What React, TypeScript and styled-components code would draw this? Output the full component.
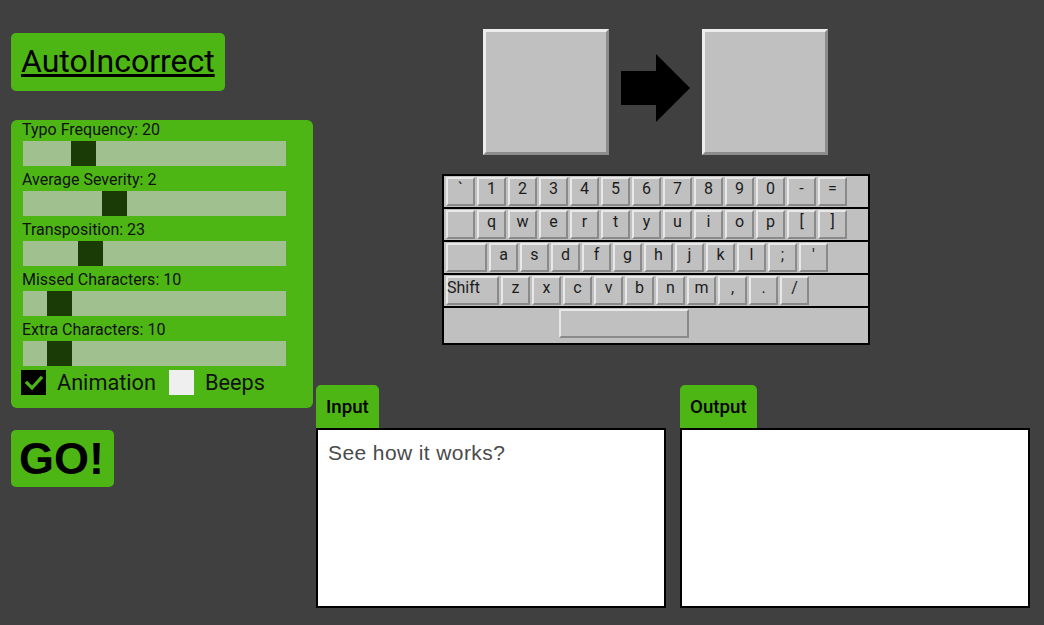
import React, { useState } from "react";
import styled, { createGlobalStyle } from "styled-components";

const GREEN = "#4eb614";

const Global = createGlobalStyle`
  html, body { margin: 0; padding: 0; background: #404040; }
  body { font-family: Roboto, "Noto Sans", sans-serif; color: #111; }
  * { box-sizing: border-box; }
`;

const Page = styled.div`
  display: flex;
  align-items: flex-start;
  width: 1044px;
  height: 625px;
  overflow: hidden;
`;

const LeftColumn = styled.div`
  display: flex;
  flex-direction: column;
  align-items: flex-start;
  width: 302px;
  margin-left: 11px;
  padding-top: 33px;
`;

const Title = styled.h1`
  margin: 0;
  padding: 10px 10px;
  background: ${GREEN};
  border-radius: 5px;
  font-family: Roboto, sans-serif;
  font-weight: 400;
  font-size: 32px;
  line-height: 37.5px;
  color: #000;
  text-decoration: underline;
  text-decoration-thickness: 3px;
  text-underline-offset: 2px;
`;

const Settings = styled.div`
  margin-top: 29px;
  width: 302px;
  background: ${GREEN};
  border-radius: 6px;
  padding: 0 10px 13px 10px;
`;

const SliderLabel = styled.label`
  display: block;
  font-size: 16px;
  line-height: 19px;
  color: #111;
  padding-left: 1px;
`;

const Range = styled.input`
  -webkit-appearance: none;
  appearance: none;
  display: block;
  width: 263px;
  height: 25px;
  margin: 2px 0 4px 2px;
  background: #a0c08f;
  outline: none;
  border: none;
  &::-webkit-slider-thumb {
    -webkit-appearance: none;
    appearance: none;
    width: 25px;
    height: 25px;
    background: #1b3b06;
    border: none;
    cursor: pointer;
  }
`;

const ToggleRow = styled.div`
  display: flex;
  align-items: center;
  height: 25px;
`;

const Toggle = styled.label`
  display: flex;
  align-items: center;
  margin-right: 13px;
  cursor: pointer;
  font-size: 21.7px;
  line-height: 25px;
  color: #111;
`;

const HiddenInput = styled.input`
  position: absolute;
  opacity: 0;
  width: 0;
  height: 0;
  margin: 0;
`;

const Box = styled.span<{ $on: boolean }>`
  display: flex;
  align-items: center;
  justify-content: center;
  width: 25px;
  height: 25px;
  margin-right: 11px;
  background: ${(p) => (p.$on ? "#000" : "#efefef")};
`;

const GoButton = styled.button`
  margin-top: 22px;
  padding: 3px 10px 2px 8px;
  border: none;
  border-radius: 5px;
  background: ${GREEN};
  font-family: "Liberation Sans", Arial, sans-serif;
  font-weight: 700;
  font-size: 45px;
  line-height: 52px;
  color: #000;
  cursor: pointer;
`;

const RightColumn = styled.div`
  display: flex;
  flex-direction: column;
  margin-left: 3px;
  width: 714px;
`;

const Stage = styled.div`
  display: flex;
  flex-direction: column;
  align-items: center;
  width: 428px;
  margin-left: 126px;
  padding-top: 29px;
`;

const Images = styled.div`
  display: flex;
  gap: 12px;
  align-items: flex-start;
  margin-left: -1px;
`;

const Frame = styled.div`
  width: 126px;
  height: 126px;
  background: #c0c0c0;
  border: 3px solid;
  border-color: #ededed #8c8c8c #8c8c8c #ededed;
`;

const Arrow = styled.svg`
  margin-top: 25px;
  display: block;
`;

const Keyboard = styled.div`
  margin-top: 19px;
  width: 428px;
  border: 2px solid #000;
  background: #c0c0c0;
`;

const KeyRow = styled.div<{ $tall?: boolean; $first?: boolean }>`
  box-sizing: content-box;
  display: flex;
  align-items: flex-start;
  height: ${(p) => (p.$tall ? 35 : 31)}px;
  padding: 0 1px;
  border-top: ${(p) => (p.$first ? "none" : "2px solid #000")};
`;

const Key = styled.div<{ $w?: number; $left?: boolean; $offset?: number }>`
  flex: none;
  width: ${(p) => p.$w ?? 29}px;
  height: 29px;
  margin: 1px;
  margin-left: ${(p) => p.$offset ?? 1}px;
  border: 2px solid;
  border-color: #e8e8e8 #8a8a8a #8a8a8a #e8e8e8;
  background: #c0c0c0;
  font-family: Roboto, sans-serif;
  font-size: 16px;
  line-height: 19px;
  color: #1c1c1c;
  text-align: ${(p) => (p.$left ? "left" : "center")};
  padding: 0;
  white-space: nowrap;
  ${(p) => (p.$left ? "text-indent: -1px;" : "")}
`;

const IORow = styled.div`
  display: flex;
  gap: 14px;
  margin-top: 40px;
`;

const IOCol = styled.div`
  display: flex;
  flex-direction: column;
  align-items: flex-start;
`;

const IOLabel = styled.div`
  padding: 11px 10px 10px 10px;
  background: ${GREEN};
  border-radius: 5px 5px 0 0;
  font-family: Roboto, sans-serif;
  font-weight: 500;
  font-size: 18.7px;
  line-height: 22px;
  color: #000;
`;

const TextBox = styled.textarea`
  display: block;
  width: 350px;
  height: 180px;
  border: 2px solid #000;
  border-radius: 0;
  background: #fff;
  padding: 11px 10px;
  margin: 0;
  resize: none;
  outline: none;
  font-family: "Liberation Sans", Arial, sans-serif;
  font-size: 21px;
  letter-spacing: 0.4px;
  color: #4a4a4a;
`;

const rows: { keys: { k: string; w?: number; left?: boolean; offset?: number }[]; tall?: boolean }[] = [
  { keys: "` 1 2 3 4 5 6 7 8 9 0 - =".split(" ").map((k) => ({ k })) },
  { keys: [{ k: "" }, ..."q w e r t y u i o p [ ]".split(" ").map((k) => ({ k }))] },
  { keys: [{ k: "", w: 41 }, ..."a s d f g h j k l ; '".split(" ").map((k) => ({ k }))] },
  { keys: [{ k: "Shift", w: 53, left: true }, ..."z x c v b n m , . /".split(" ").map((k) => ({ k }))] },
  { keys: [{ k: "", w: 130, offset: 114 }], tall: true },
];

const sliders = [
  { label: "Typo Frequency", min: 0, max: 100, value: 20 },
  { label: "Average Severity", min: 0, max: 6, value: 2 },
  { label: "Transposition", min: 0, max: 100, value: 23 },
  { label: "Missed Characters", min: 0, max: 100, value: 10 },
  { label: "Extra Characters", min: 0, max: 100, value: 10 },
];

function Check({ on }: { on: boolean }) {
  return on ? (
    <svg width="25" height="25" viewBox="0 0 25 25">
      <polyline points="6,13 11,18 20,8" fill="none" stroke={GREEN} strokeWidth="3.2" strokeLinecap="square" />
    </svg>
  ) : null;
}

export default function App() {
  const [vals, setVals] = useState(sliders.map((s) => s.value));
  const [anim, setAnim] = useState(true);
  const [beeps, setBeeps] = useState(false);

  return (
    <>
      <Global />
      <Page>
        <LeftColumn>
          <Title>AutoIncorrect</Title>
          <Settings>
            {sliders.map((s, i) => (
              <div key={s.label}>
                <SliderLabel>
                  {s.label}: {vals[i]}
                </SliderLabel>
                <Range
                  type="range"
                  min={s.min}
                  max={s.max}
                  value={vals[i]}
                  onChange={(e) => {
                    const n = [...vals];
                    n[i] = Number(e.target.value);
                    setVals(n);
                  }}
                />
              </div>
            ))}
            <ToggleRow>
              <Toggle>
                <HiddenInput type="checkbox" checked={anim} onChange={() => setAnim(!anim)} />
                <Box $on={anim}>
                  <Check on={anim} />
                </Box>
                Animation
              </Toggle>
              <Toggle>
                <HiddenInput type="checkbox" checked={beeps} onChange={() => setBeeps(!beeps)} />
                <Box $on={beeps}>
                  <Check on={beeps} />
                </Box>
                Beeps
              </Toggle>
            </ToggleRow>
          </Settings>
          <GoButton>GO!</GoButton>
        </LeftColumn>
        <RightColumn>
          <Stage>
            <Images>
              <Frame />
              <Arrow width="69" height="68" viewBox="0 0 69 68">
                <polygon points="0,17 35,17 35,0 69,34 35,68 35,51 0,51" fill="#000" />
              </Arrow>
              <Frame />
            </Images>
            <Keyboard>
              {rows.map((r, ri) => (
                <KeyRow key={ri} $tall={r.tall} $first={ri === 0}>
                  {r.keys.map((k, ki) => (
                    <Key key={ki} $w={k.w} $left={k.left} $offset={k.offset}>
                      {k.k}
                    </Key>
                  ))}
                </KeyRow>
              ))}
            </Keyboard>
          </Stage>
          <IORow>
            <IOCol>
              <IOLabel>Input</IOLabel>
              <TextBox defaultValue="See how it works?" spellCheck={false} />
            </IOCol>
            <IOCol>
              <IOLabel>Output</IOLabel>
              <TextBox spellCheck={false} />
            </IOCol>
          </IORow>
        </RightColumn>
      </Page>
    </>
  );
}
